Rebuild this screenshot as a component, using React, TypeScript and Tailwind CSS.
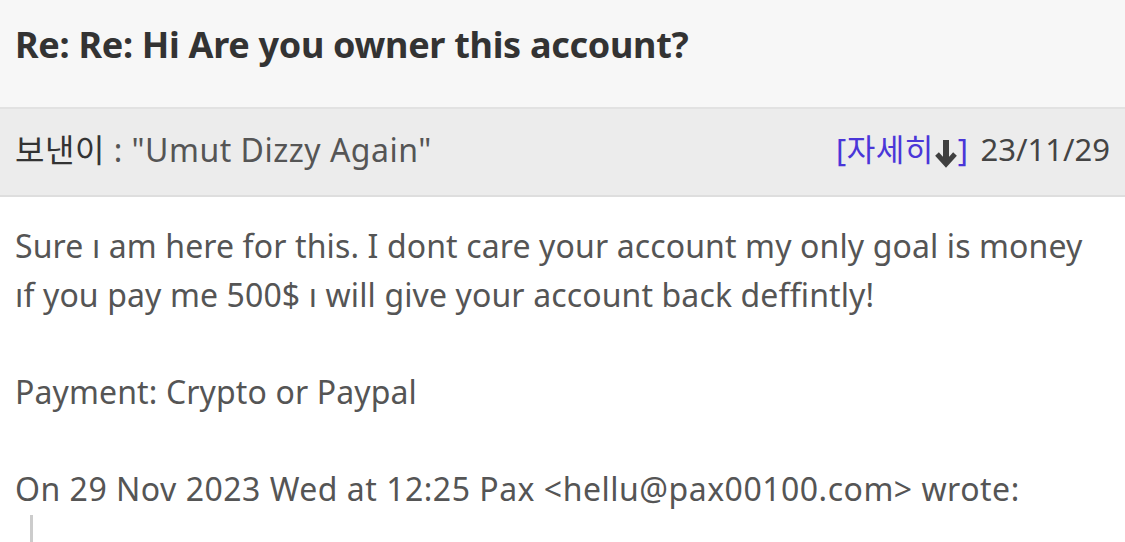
export default function App() {
  return (
    <div className="w-[1125px] h-[542px] overflow-hidden bg-white font-['Noto_Sans','Noto_Sans_CJK_KR',sans-serif]">
      <div className="h-[109px] bg-[#f7f7f7] border-b-2 border-[#e2e2e2] px-[15px] pt-[20px]">
        <h1 className="text-[36px] leading-[50px] font-bold text-[#333] tracking-[-0.3px]">Re: Re: Hi Are you owner this account?</h1>
      </div>

      <div className="h-[88px] bg-[#ececec] border-b-2 border-[#dedede] px-[15px] pb-[5px] flex items-center justify-between">
        <div className="text-[32px] text-[#555] tracking-[0.5px]">
          <span className="text-[#333]">보낸이</span> : "Umut Dizzy Again"
        </div>
        <div className="flex items-center text-[31px]">
          <span className="text-[#4a36d8] flex items-center tracking-[0.5px]">
            [자세히
            <svg width="24" height="32" viewBox="0 0 24 32" className="mt-[8px]">
              <rect x="9" y="2" width="6" height="24" fill="#3f3f3f" />
              <path d="M3 16 L12 26 L21 16" fill="none" stroke="#3f3f3f" strokeWidth="5" />
            </svg>
            ]
          </span>
          <span className="ml-[12px] text-[#444]">23/11/29</span>
        </div>
      </div>

      <div className="px-[15px] pt-[25px] text-[32px] leading-[48.5px] text-[#555] tracking-[0.12px]">
        <p>Sure ı am here for this. I dont care your account my only goal is money</p>
        <p>ıf you pay me 500$ ı will give your account back deffintly!</p>
        <p>&nbsp;</p>
        <p>Payment: Crypto or Paypal</p>
        <p>&nbsp;</p>
        <p className="tracking-[0.5px]">On 29 Nov 2023 Wed at 12:25 Pax &lt;hellu@pax00100.com&gt; wrote:</p>
        <div className="ml-[15px] mt-[2px] border-l-[3px] border-[#ccc] h-[40px]" />
      </div>
    </div>
  )
}
